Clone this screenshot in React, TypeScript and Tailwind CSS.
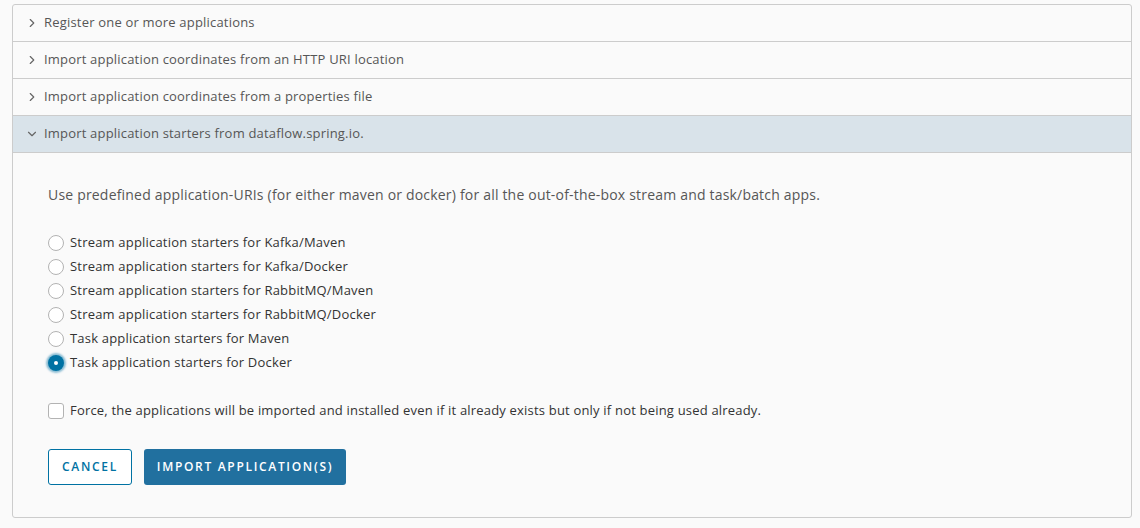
import { ChevronDown, ChevronRight } from 'lucide-react'

const SECTIONS = [
  'Register one or more applications',
  'Import application coordinates from an HTTP URI location',
  'Import application coordinates from a properties file',
] as const

const STARTERS = [
  'Stream application starters for Kafka/Maven',
  'Stream application starters for Kafka/Docker',
  'Stream application starters for RabbitMQ/Maven',
  'Stream application starters for RabbitMQ/Docker',
  'Task application starters for Maven',
  'Task application starters for Docker',
] as const

function Radio({ checked }: { checked?: boolean }) {
  if (checked) {
    return (
      <span className="flex h-4 w-4 items-center justify-center rounded-full bg-[#0072a3] shadow-[0_0_2px_2px_rgba(0,114,163,0.45)]">
        <span className="h-1 w-1 rounded-full bg-white" />
      </span>
    )
  }
  return <span className="h-4 w-4 rounded-full border border-[#b3b3b3] bg-white" />
}

export default function App() {
  return (
    <div
      className="min-h-[528px] bg-[#fafafa] px-3 pt-1 tracking-[0.012em] text-[#565656]"
      style={{ fontFamily: '"Open Sans", "Liberation Sans", sans-serif' }}
    >
      <div className="w-[1120px] overflow-hidden rounded-[3px] border border-[#cccccc] bg-[#fafafa]">
        {SECTIONS.map((title) => (
          <div
            key={title}
            className="flex h-[37px] items-center gap-[5px] border-b border-[#cccccc] pl-[12px] text-[13px]"
          >
            <ChevronRight className="h-3.5 w-3.5 text-[#666]" strokeWidth={2} aria-hidden />
            <span>{title}</span>
          </div>
        ))}
        <div className="flex h-[37px] items-center gap-[5px] border-b border-[#cccccc] bg-[#d9e3ea] pl-[12px] text-[13px]">
          <ChevronDown className="h-3.5 w-3.5 text-[#666]" strokeWidth={2} aria-hidden />
          <span>Import application starters from dataflow.spring.io.</span>
        </div>

        <div className="pb-8 pl-[35px] pr-9 pt-[31px]">
          <p className="text-[14px] text-[#565656]">
            Use predefined application-URIs (for either maven or docker) for all the out-of-the-box stream and
            task/batch apps.
          </p>

          <div className="mt-[26px] flex flex-col">
            {STARTERS.map((label, i) => (
              <label key={label} className="flex h-6 items-center gap-[6px] text-[13px] text-[#333]">
                <Radio checked={i === STARTERS.length - 1} />
                <span>{label}</span>
              </label>
            ))}
          </div>

          <label className="mt-[26px] flex items-center gap-[6px] text-[13px] text-[#333]">
            <span className="h-4 w-4 rounded-[3px] border border-[#b3b3b3] bg-white" />
            <span>
              Force, the applications will be imported and installed even if it already exists but only if not being
              used already.
            </span>
          </label>

          <div className="mt-[28px] flex gap-3">
            <button className="h-9 w-[84px] rounded-[3px] border border-[#0072a3] bg-white text-[12px] font-semibold tracking-[0.14em] text-[#0072a3]">
              CANCEL
            </button>
            <button className="h-9 w-[202px] rounded-[3px] bg-[#21709f] text-[12px] font-semibold tracking-[0.14em] text-white">
              IMPORT APPLICATION(S)
            </button>
          </div>
        </div>
      </div>
    </div>
  )
}
